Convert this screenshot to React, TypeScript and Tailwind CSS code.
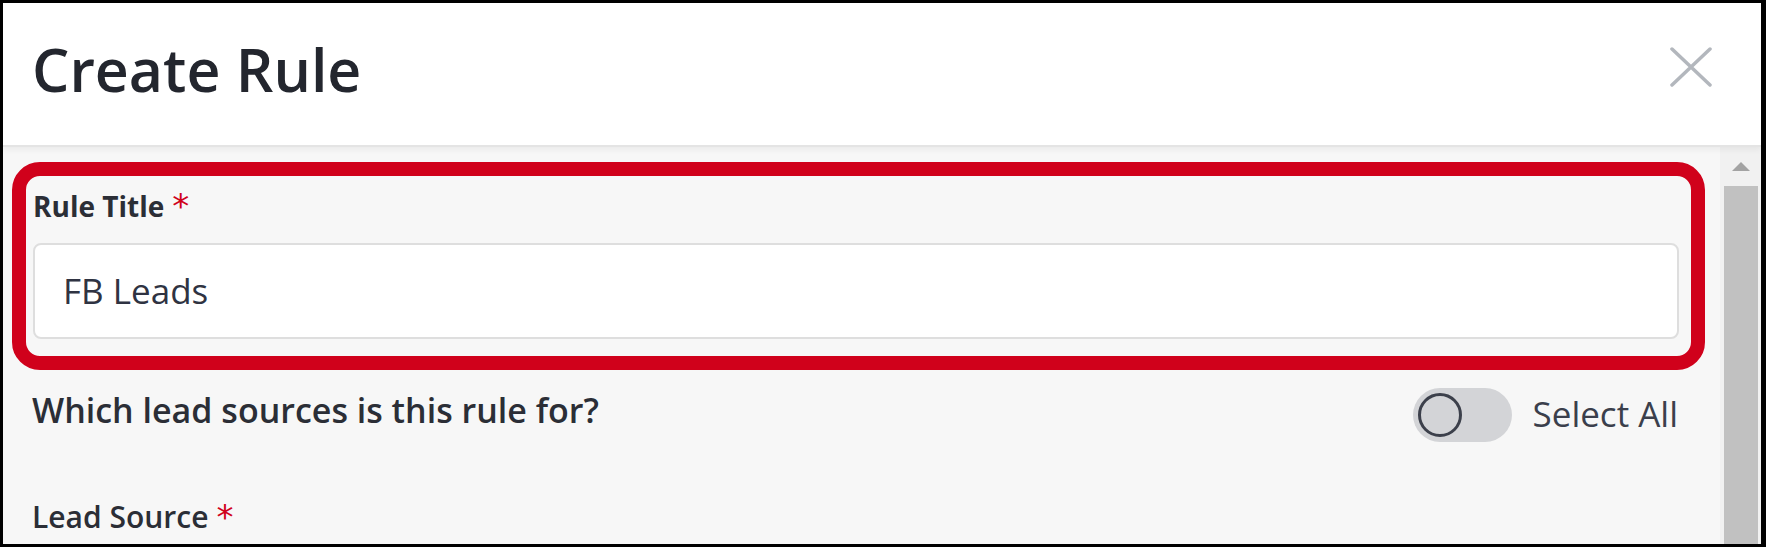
import { useState } from "react";

const CloseIcon = () => (
  <svg width="42" height="40" viewBox="0 0 42 40" className="mb-[5px]" fill="none">
    <path d="M2 2 L40 38 M40 2 L2 38" stroke="#b3b7bd" strokeWidth="3.5" strokeLinecap="round" />
  </svg>
);

const Required = () => (
  <span className="ml-[8px] text-[34px] leading-[34px] text-[#d0021b] font-['DejaVu_Sans',sans-serif]">*</span>
);

const App = () => {
  const [all, setAll] = useState(false);

  return (
    <div className="w-[1766px] h-[547px] border-[3px] border-r-[5px] border-black bg-[#f7f7f7] flex flex-col overflow-hidden font-['Open_Sans',sans-serif]">
      {/* Header */}
      <header className="h-[144px] shrink-0 bg-white border-b-2 border-[#e4e4e4] shadow-[0_3px_6px_rgba(0,0,0,0.05)] relative z-10 flex items-center justify-between pl-[29px] pr-[49px] pb-[9px]">
        <h1 className="text-[59px] font-semibold text-[#23262e] leading-none">Create Rule</h1>
        <CloseIcon />
      </header>

      <div className="flex flex-1 min-h-0">
        {/* Form */}
        <main className="flex-1 pt-[15px] pl-[9px] pr-[15px]">
          <section className="border-[14px] border-[#d0011b] rounded-[28px] pt-[13px] pl-[7px] pr-[12px] pb-[17px]">
            <div className="flex items-start h-[35px] mb-[19px]">
              <span className="text-[28px] font-bold leading-[35px] text-[#2b2e36]">Rule Title</span>
              <Required />
            </div>
            <div className="h-[96px] bg-white border-2 border-[#dedede] rounded-[8px] flex items-center pl-[28px]">
              <span className="text-[35px] text-[#2f3342]">FB Leads</span>
            </div>
          </section>

          <div className="flex items-center justify-between mt-[15px] pl-[20px] pr-[27px]">
            <span className="text-[34px] font-semibold text-[#2b2e36] pb-[8px]">Which lead sources is this rule for?</span>
            <div className="flex items-center gap-[21px]">
              <button
                onClick={() => setAll(!all)}
                className="w-[99px] h-[54px] rounded-full bg-[#d3d4d7] p-[5px] flex items-center"
              >
                <span className="w-[44px] h-[44px] rounded-full border-[3px] border-[#3c404b]" />
              </button>
              <span className="text-[35px] text-[#3b3f4c]">Select All</span>
            </div>
          </div>

          <div className="flex items-start mt-[56px] pl-[20px]">
            <span className="text-[30px] font-semibold leading-[34px] text-[#2b2e36]">Lead Source</span>
            <Required />
          </div>
        </main>

        {/* Scrollbar */}
        <div className="w-[41px] shrink-0 bg-[#f1f1f1] flex flex-col items-center pt-[15px]">
          <div className="w-0 h-0 border-l-[9px] border-r-[9px] border-b-[9px] border-l-transparent border-r-transparent border-b-[#a3a3a3]" />
          <div className="mt-[15px] w-[34px] flex-1 bg-[#c1c1c1]" />
        </div>
      </div>
    </div>
  );
};

export default App;
